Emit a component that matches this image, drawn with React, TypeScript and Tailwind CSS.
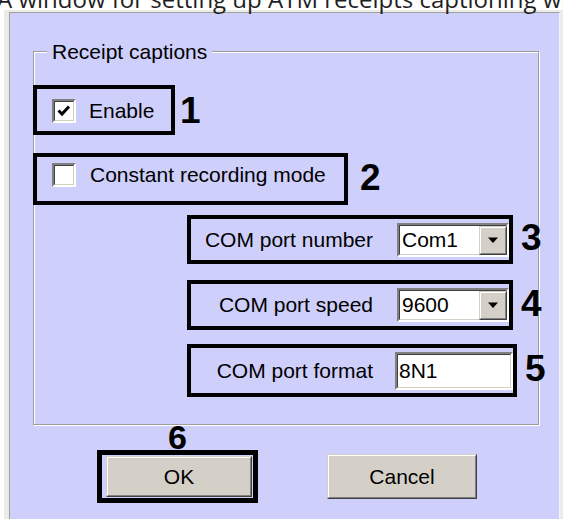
const sunkenOuter = "border-2 border-t-[#808080] border-l-[#808080] border-r-white border-b-white";
const sunkenInner = "border border-t-[#404040] border-l-[#404040] border-r-[#d4d0c8] border-b-[#d4d0c8]";
const raisedOuter = "border border-t-[#d4d0c8] border-l-[#d4d0c8] border-r-[#404040] border-b-[#404040]";
const raisedInner = "border border-t-white border-l-white border-r-[#808080] border-b-[#808080]";

function Digit({ n, className = "" }: { n: string; className?: string }) {
  return <span className={`text-[37px] font-bold leading-none text-black ${className}`}>{n}</span>;
}

function Check({ checked }: { checked?: boolean }) {
  return (
    <span className={`flex h-[24px] w-[24px] shrink-0 bg-white ${sunkenOuter}`}>
      <span className={`flex h-full w-full items-center justify-center ${sunkenInner}`}>
        {checked && (
          <svg width="16" height="16" viewBox="0 0 16 16">
            <polyline points="2.5,7.5 6,11 13,3.5" fill="none" stroke="#000" strokeWidth="3" />
          </svg>
        )}
      </span>
    </span>
  );
}

function Combo({ value }: { value: string }) {
  return (
    <div className={`flex h-[34px] w-[112px] ${sunkenOuter}`}>
      <div className={`flex flex-1 items-stretch bg-white ${sunkenInner}`}>
        <span className="flex-1 pl-[2px] text-[21px] leading-[28px] text-black">{value}</span>
        <div className={`mb-[-1px] mr-[-1px] flex w-[28px] bg-[#d4d0c8] ${raisedOuter}`}>
          <div className={`flex flex-1 items-center justify-center ${raisedInner}`}>
            <svg width="12" height="7" viewBox="0 0 12 7">
              <polygon points="1,0.5 11,0.5 6,6" fill="#000" />
            </svg>
          </div>
        </div>
      </div>
    </div>
  );
}

function Field({ value }: { value: string }) {
  return (
    <div className={`flex h-[38px] w-[118px] ${sunkenOuter}`}>
      <div className={`flex flex-1 items-center bg-white pl-[1px] ${sunkenInner}`}>
        <span className="text-[21px] leading-[28px] text-black">{value}</span>
      </div>
    </div>
  );
}

function PushButton({ label, className }: { label: string; className: string }) {
  return (
    <div className={`flex bg-[#d4d0c8] ${raisedOuter} ${className}`}>
      <div className={`flex flex-1 items-center justify-center text-[21px] text-black ${raisedInner}`}>
        {label}
      </div>
    </div>
  );
}

function PortRow({ label, children, n, h, mt }: { label: string; children: React.ReactNode; n: string; h: string; mt: string }) {
  return (
    <div className={`ml-[153px] flex items-center gap-[8px] ${mt}`}>
      <div className={`flex w-[330px] items-center border-4 border-black ${h}`}>
        <span className="w-[182px] text-right text-[21px] leading-[24px] text-black">{label}</span>
        <div className="ml-[22px] flex">{children}</div>
      </div>
      <Digit n={n} className="mt-[-4px]" />
    </div>
  );
}

export default function App() {
  return (
    <div className="h-[519px] w-[563px] overflow-hidden bg-white font-['Liberation_Sans',Arial,sans-serif]">
      <div className="ml-[-3px] mt-[-13px] h-[22px] whitespace-nowrap font-['Open_Sans',sans-serif] text-[24px] leading-[24px] text-[#1f1f1f]">
        A window for setting up ATM receipts captioning with
      </div>

      <div className="ml-[4px] mt-[1px] h-[520px] bg-[#ecebe6] pl-[5px] pr-[3px] pt-[2px]">
        <div className="h-full border-l border-r border-t border-l-[#a0a0a0] border-r-[#f2f2ff] border-t-[#a0a0a0] bg-[#cfcffc]">
          {/* group box */}
          <div className="relative ml-[23px] mt-[38px] w-[506px] border border-[#9d9d9d] pb-[27px] shadow-[inset_1px_1px_0_#fff,1px_1px_0_#fff]">
            <span className="absolute left-[13px] top-[-11px] bg-[#cfcffc] px-[5px] text-[21px] leading-[22px] text-black">
              Receipt captions
            </span>

            <div className="ml-[-1px] mt-[33px] flex items-center gap-[5px]">
              <div className="flex h-[50px] w-[142px] items-start border-4 border-black pl-[15px] pt-[10px]">
                <div className="flex items-center gap-[13px]">
                  <Check checked />
                  <span className="text-[21px] leading-[24px] text-black">Enable</span>
                </div>
              </div>
              <Digit n="1" />
            </div>

            <div className="ml-[-1px] mt-[18px] flex items-center gap-[12px]">
              <div className="flex h-[52px] w-[315px] items-start border-4 border-black pl-[15px] pt-[6px]">
                <div className="flex items-center gap-[14px]">
                  <Check />
                  <span className="text-[21px] leading-[24px] text-black">Constant recording mode</span>
                </div>
              </div>
              <Digit n="2" className="mt-[-4px]" />
            </div>

            <PortRow label="COM port number" n="3" h="h-[49px]" mt="mt-[10px]">
              <div className="ml-[2px]">
                <Combo value="Com1" />
              </div>
            </PortRow>
            <PortRow label="COM port speed" n="4" h="h-[50px]" mt="mt-[16px]">
              <div className="ml-[2px]">
                <Combo value="9600" />
              </div>
            </PortRow>
            <PortRow label="COM port format" n="5" h="h-[53px]" mt="mt-[14px]">
              <Field value="8N1" />
            </PortRow>
          </div>

          {/* buttons */}
          <div className="ml-[87px] flex items-end">
            <div className="flex flex-col items-center">
              <span className="h-[25px] text-[34px] font-bold leading-[25px] text-black">6</span>
              <div className="flex h-[53px] w-[161px] border-[5px] border-black pb-[1px] pl-[4px] pr-[1px] pt-[1px]">
                <PushButton label="OK" className="flex-1" />
              </div>
            </div>
            <PushButton label="Cancel" className="mb-[4px] ml-[69px] h-[45px] w-[150px]" />
          </div>
        </div>
      </div>
    </div>
  );
}
